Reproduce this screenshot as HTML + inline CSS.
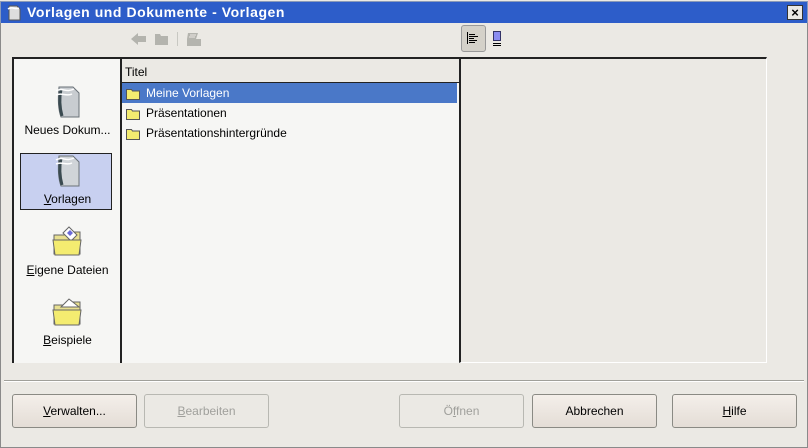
<!DOCTYPE html>
<html><head><meta charset="utf-8"><style>
*{margin:0;padding:0;box-sizing:border-box}
body{width:808px;height:448px;overflow:hidden;background:#ebe9e4;font-family:"Liberation Sans",sans-serif;font-size:12px;color:#000;position:relative}
.a{position:absolute}
.title{left:0;top:1px;width:808px;height:22px;background:#2d5dc9;border:1px solid #8a9ab8;border-bottom:none}
.title span{position:absolute;left:26px;top:2px;color:#fff;font-weight:bold;font-size:14px;letter-spacing:.55px}
.close{right:4px;top:3px;width:16px;height:15px;background:#ebe9e4;border:1px solid #333;font:bold 13px "Liberation Sans";text-align:center;line-height:13px}
.frame{left:0;top:23px;width:808px;height:425px;border:1px solid #8a8a8a;border-top:none}
.left{left:12px;top:57px;width:109px;height:306px;background:#f6f6f4;border-left:2px solid #222;border-top:2px solid #222}
.item{position:absolute;left:8px;width:91px;text-align:center;font-size:12px}
.list{left:120px;top:57px;width:339px;height:306px;background:#f6f6f4;border-left:2px solid #222;border-top:2px solid #222}
.hdr{height:24px;background:#ebe9e4;border-bottom:1px solid #222;padding:6px 0 0 3px}
.row{height:20px;position:relative;padding:3px 0 0 24px;font-size:12px}
.row svg{position:absolute;left:4px;top:5px}
.sel{background:#4a78c8;color:#fff;margin-right:2px}
.prev{left:459px;top:57px;width:308px;height:306px;border-left:2px solid #222;border-top:2px solid #222;border-right:1px solid #fff;border-bottom:1px solid #fff}
.sep{left:4px;top:380px;width:800px;height:2px;border-top:1px solid #a0a09a;border-bottom:1px solid #fff}
.btn{top:394px;width:125px;height:34px;border:1px solid #8a8a84;border-radius:3px;background:linear-gradient(#f4efea,#e4ddd6);text-align:center;line-height:32px;font-size:12px}
.dis{color:#a0a09c;border-color:#b8b8b2;background:#ebe9e4}
u{text-decoration:underline}
</style></head><body>
<div class="a frame"></div>
<div class="a title">
<svg class="a" style="left:5px;top:2px" width="16" height="17" viewBox="0 0 16 17"><path d="M3 2h8l3 3v11H3z" fill="#ddd" stroke="#555"/><path d="M2 5c4-3 7 1 11-1" stroke="#fff" fill="none" stroke-width="1.5"/></svg>
<span>Vorlagen und Dokumente - Vorlagen</span>
<div class="a close">×</div>
</div>
<svg class="a" style="left:130px;top:30px" width="80" height="18" viewBox="0 0 80 18">
<path d="M1 9l7-6v3h8v6H8v3z" fill="#b4b4ae"/>
<path d="M25 4h5l1 2h7v9H25z" fill="#b4b4ae"/>
<rect x="47" y="2" width="1" height="14" fill="#c8c8c2"/>
<path d="M58 3h10l-2 6h5v7H57v-7z" fill="#b4b4ae"/><path d="M60 5h6M59 7h6" stroke="#ebe9e4"/>
</svg>
<div class="a" style="left:461px;top:25px;width:25px;height:27px;background:#d4d1c9;border:1px solid #999;border-radius:3px"></div>
<svg class="a" style="left:466px;top:31px" width="14" height="14" viewBox="0 0 14 14"><path d="M1.5 1v12M3 3.5h6M3 5.5h9M3 7.5h5M3 9.5h8M3 11.5h6" stroke="#000" stroke-width="1" fill="none"/></svg>
<svg class="a" style="left:492px;top:31px" width="10" height="16" viewBox="0 0 10 16"><rect x="1.5" y="0.5" width="7" height="9" fill="#8a8cf0" stroke="#336"/><path d="M1 12.5h8M1 14.5h8" stroke="#000" fill="none"/></svg>

<div class="a left">
<div class="item" style="top:24px"><svg width="34" height="36" viewBox="0 0 34 36"><path d="M8 4h14l6 6v24H10c-3-8-3-20-2-30z" fill="#c8ccd0" stroke="#6a7278"/><path d="M10 6c-2 10-1 20 1 27" stroke="#3a4a50" stroke-width="3" fill="none"/><path d="M5 8c6-4 10 2 18-2M5 12c6-3 10 2 16-1" stroke="#fff" stroke-width="1.5" fill="none"/></svg><div style="margin-top:1px">Neues Dokum...</div></div>
<div class="a" style="left:6px;top:94px;width:92px;height:57px;background:#c8d0f0;border:1px solid #222"></div>
<div class="item" style="top:93px"><svg width="34" height="36" viewBox="0 0 34 36"><path d="M8 4h14l6 6v24H10c-3-8-3-20-2-30z" fill="#d0d4d8" stroke="#6a7278"/><path d="M10 6c-2 10-1 20 1 27" stroke="#3a4a50" stroke-width="3" fill="none"/><path d="M5 8c6-4 10 2 18-2M5 12c6-3 10 2 16-1" stroke="#fff" stroke-width="1.5" fill="none"/></svg><div style="margin-top:1px"><u>V</u>orlagen</div></div>
<div class="item" style="top:166px"><svg width="34" height="34" viewBox="0 0 34 34"><path d="M3 10h10l2-3h14v22H3z" fill="#e8e090" stroke="#666"/><path d="M12 8l6-6 8 8-6 6z" fill="#fff" stroke="#666"/><path d="M16 8l3-3 3 3-3 3z" fill="#6a6ad8"/><path d="M2 15h28l-2 15H4z" fill="#f4ec70" stroke="#666"/></svg><div style="margin-top:1px"><u>E</u>igene Dateien</div></div>
<div class="item" style="top:236px"><svg width="34" height="34" viewBox="0 0 34 34"><path d="M3 10h10l2-3h14v22H3z" fill="#e8e090" stroke="#666"/><path d="M10 12l8-8 10 8z" fill="#fff" stroke="#666"/><path d="M2 15h28l-2 15H4z" fill="#f4ec70" stroke="#666"/></svg><div style="margin-top:1px"><u>B</u>eispiele</div></div>
</div>

<div class="a list">
<div class="hdr">Titel</div>
<div class="row sel"><svg width="15" height="12" viewBox="0 0 15 12"><path d="M0.5 1.5h5l1 1.5h7v8.5H.5z" fill="#f4ec70" stroke="#555"/></svg>Meine Vorlagen</div>
<div class="row"><svg width="15" height="12" viewBox="0 0 15 12"><path d="M0.5 1.5h5l1 1.5h7v8.5H.5z" fill="#f4ec70" stroke="#555"/></svg>Präsentationen</div>
<div class="row"><svg width="15" height="12" viewBox="0 0 15 12"><path d="M0.5 1.5h5l1 1.5h7v8.5H.5z" fill="#f4ec70" stroke="#555"/></svg>Präsentationshintergründe</div>
</div>
<div class="a prev"></div>
<div class="a sep"></div>
<div class="a btn" style="left:12px"><u>V</u>erwalten...</div>
<div class="a btn dis" style="left:144px"><u>B</u>earbeiten</div>
<div class="a btn dis" style="left:399px">Ö<u>f</u>fnen</div>
<div class="a btn" style="left:532px">Abbrechen</div>
<div class="a btn" style="left:672px"><u>H</u>ilfe</div>
</body></html>
